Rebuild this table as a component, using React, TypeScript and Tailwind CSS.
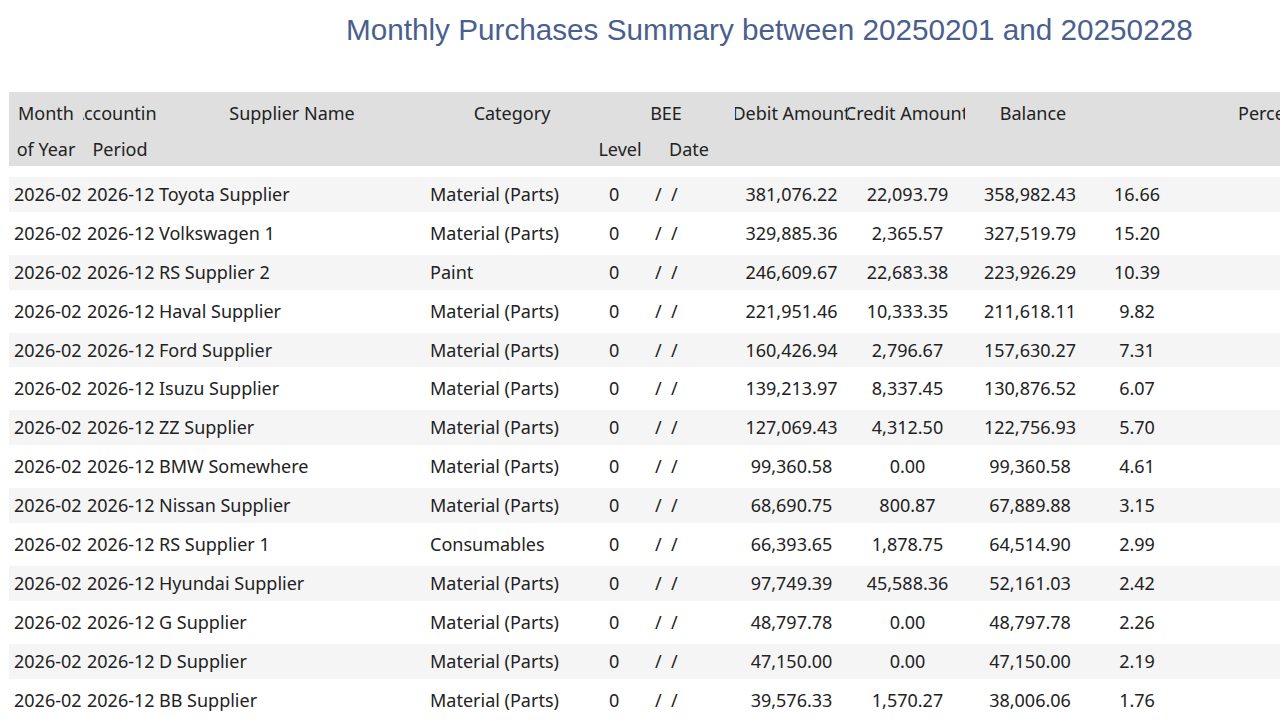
import React from 'react';

const rows = [
  ['Toyota Supplier', 'Material (Parts)', '381,076.22', '22,093.79', '358,982.43', '16.66'],
  ['Volkswagen 1', 'Material (Parts)', '329,885.36', '2,365.57', '327,519.79', '15.20'],
  ['RS Supplier 2', 'Paint', '246,609.67', '22,683.38', '223,926.29', '10.39'],
  ['Haval Supplier', 'Material (Parts)', '221,951.46', '10,333.35', '211,618.11', '9.82'],
  ['Ford Supplier', 'Material (Parts)', '160,426.94', '2,796.67', '157,630.27', '7.31'],
  ['Isuzu Supplier', 'Material (Parts)', '139,213.97', '8,337.45', '130,876.52', '6.07'],
  ['ZZ Supplier', 'Material (Parts)', '127,069.43', '4,312.50', '122,756.93', '5.70'],
  ['BMW Somewhere', 'Material (Parts)', '99,360.58', '0.00', '99,360.58', '4.61'],
  ['Nissan Supplier', 'Material (Parts)', '68,690.75', '800.87', '67,889.88', '3.15'],
  ['RS Supplier 1', 'Consumables', '66,393.65', '1,878.75', '64,514.90', '2.99'],
  ['Hyundai Supplier', 'Material (Parts)', '97,749.39', '45,588.36', '52,161.03', '2.42'],
  ['G Supplier', 'Material (Parts)', '48,797.78', '0.00', '48,797.78', '2.26'],
  ['D Supplier', 'Material (Parts)', '47,150.00', '0.00', '47,150.00', '2.19'],
  ['BB Supplier', 'Material (Parts)', '39,576.33', '1,570.27', '38,006.06', '1.76'],
];

function HeadCell({ w, children }: { w: string; children?: React.ReactNode }) {
  return (
    <div className={`${w} flex justify-center overflow-hidden whitespace-nowrap`}>
      {children}
    </div>
  );
}

export default function App() {
  return (
    <div
      className="w-[1280px] h-[720px] overflow-hidden bg-white text-[#222] text-[18px]"
      style={{ fontFamily: '"Noto Sans", "Open Sans", sans-serif' }}
    >
      <h1
        className="pl-[346px] pt-[10px] h-[92px] text-[29.7px] leading-[40px] text-[#4a5f8e] whitespace-nowrap"
        style={{ fontFamily: '"Liberation Sans", Arial, sans-serif' }}
      >
        Monthly Purchases Summary between 20250201 and 20250228
      </h1>

      <div className="ml-[9px] w-[1400px] h-[74px] bg-[#dfdfdf] flex flex-col">
        <div className="flex h-[39px] items-center pt-[3px]">
          <HeadCell w="w-[74px]">Month</HeadCell>
          <HeadCell w="w-[74px]">Accounting</HeadCell>
          <HeadCell w="w-[270px]">Supplier Name</HeadCell>
          <HeadCell w="w-[170px]">Category</HeadCell>
          <HeadCell w="w-[138px]">BEE</HeadCell>
          <HeadCell w="w-[113px]">Debit Amount</HeadCell>
          <HeadCell w="w-[117px]">Credit Amount</HeadCell>
          <HeadCell w="w-[136px]">Balance</HeadCell>
          <HeadCell w="w-[72px]" />
          <div className="pl-[65px] whitespace-nowrap">Percentage</div>
        </div>
        <div className="flex h-[35px] items-center pt-[2px]">
          <HeadCell w="w-[74px]">of Year</HeadCell>
          <HeadCell w="w-[74px]">Period</HeadCell>
          <HeadCell w="w-[270px]" />
          <HeadCell w="w-[170px]" />
          <HeadCell w="w-[46px]">Level</HeadCell>
          <HeadCell w="w-[92px]">Date</HeadCell>
        </div>
      </div>

      <div className="h-[9px]" />

      <div className="flex flex-col">
        {rows.map((r, i) => (
          <div key={i} className="h-[38.9px] py-[2px]">
            <div
              className={`ml-[9px] w-[1400px] h-full flex items-center whitespace-nowrap ${
                i % 2 === 0 ? 'bg-[#f5f5f5]' : 'bg-white'
              }`}
            >
              <div className="w-[74px] pl-[5px]">2026-02</div>
              <div className="w-[74px] pl-[4px]">2026-12</div>
              <div className="w-[270px] pl-[2px]">{r[0]}</div>
              <div className="w-[170px] pl-[3px]">{r[1]}</div>
              <div className="w-[46px] pl-[12px]">0</div>
              <div className="w-[92px] pl-[12px] whitespace-pre">{'/  /'}</div>
              <div className="w-[113px] text-center">{r[2]}</div>
              <div className="w-[117px] text-center pl-[2px]">{r[3]}</div>
              <div className="w-[130px] text-center">{r[4]}</div>
              <div className="w-[84px] text-center">{r[5]}</div>
            </div>
          </div>
        ))}
      </div>
    </div>
  );
}
